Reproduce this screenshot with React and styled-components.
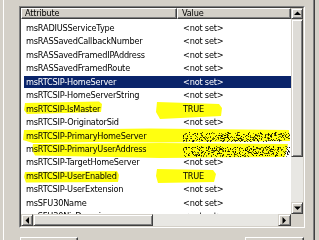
import React, { useMemo } from "react";
import styled, { createGlobalStyle } from "styled-components";

const FACE = "#d4d0c8";
const SHADOW = "#808080";
const DARK = "#404040";
const FONT = `"DejaVu Sans", "Liberation Sans", sans-serif`;

const Global = createGlobalStyle`
  html, body { margin: 0; padding: 0; background: ${FACE}; overflow: hidden; }
  #root { width: 319px; height: 240px; }
`;

const Page = styled.div`
  position: relative;
  width: 319px;
  height: 240px;
  overflow: hidden;
  background: ${FACE};
  display: flex;
  font-family: ${FONT};
  font-size: 8.2px;
  letter-spacing: -0.2px;
  color: #000;
`;

const TabPage = styled.div`
  margin-left: 3px;
  width: 312px;
  height: 240px;
  box-sizing: border-box;
  border-left: 1px solid #fff;
  border-right: 1px solid ${DARK};
  box-shadow: inset -1px 0 ${SHADOW};
  padding: 6px 0 0 15px;
  display: flex;
  flex-direction: column;
`;

const ListBox = styled.div`
  width: 286px;
  height: 222px;
  box-sizing: border-box;
  border: 1px solid;
  border-color: ${SHADOW} #fff #fff ${SHADOW};
  flex: none;
`;

const ListInner = styled.div`
  height: 100%;
  box-sizing: border-box;
  border: 1px solid;
  border-color: ${DARK} ${FACE} ${FACE} ${DARK};
  display: grid;
  grid-template-columns: 1fr 12px;
  grid-template-rows: 1fr 12px;
`;

const ListView = styled.div`
  background: #fff;
  overflow: hidden;
  display: flex;
  flex-direction: column;
`;

const Header = styled.div`
  display: flex;
  height: 11px;
  flex: none;
`;

const HeaderCell = styled.div`
  box-sizing: border-box;
  width: ${(p) => (p.$w ? `${p.$w}px` : "auto")};
  flex: ${(p) => (p.$w ? "none" : "1")};
  background: ${FACE};
  border-top: 1px solid #fff;
  border-left: 1px solid #fff;
  border-right: 1px solid ${DARK};
  border-bottom: 1px solid ${DARK};
  box-shadow: inset -1px -1px ${SHADOW};
  padding-left: ${(p) => p.$pad}px;
  line-height: 9px;
  white-space: nowrap;
  overflow: hidden;
`;

const Rows = styled.div`
  padding-top: 2.6px;
  display: flex;
  flex-direction: column;
`;

const Row = styled.div`
  display: flex;
  align-items: stretch;
  height: 13.45px;
  margin-left: 3px;
  box-sizing: border-box;
  padding: 0.6px 0 1.2px;
  flex: none;
  background: ${(p) => (p.$sel ? "#0a246a" : "transparent")};
  background-clip: content-box;
  color: ${(p) => (p.$sel ? "#fff" : "#000")};
  white-space: nowrap;
`;

const Cell = styled.div`
  box-sizing: border-box;
  width: ${(p) => (p.$w ? `${p.$w}px` : "auto")};
  flex: ${(p) => (p.$w ? "none" : "1")};
  padding-left: ${(p) => p.$pad}px;
  display: flex;
  align-items: center;
  overflow: hidden;
`;

const VScroll = styled.div`
  display: flex;
  flex-direction: column;
  background: #e8e7e3;
`;

const HScroll = styled.div`
  display: flex;
  flex-direction: row;
  background: #e8e7e3;
`;

const Corner = styled.div`
  background: ${FACE};
`;

const ArrowBtn = styled.div`
  box-sizing: border-box;
  flex: none;
  width: ${(p) => p.$w};
  height: ${(p) => p.$h};
  background: ${FACE};
  border: 1px solid;
  border-color: ${FACE} ${DARK} ${DARK} ${FACE};
  box-shadow: inset 1px 1px #fff, inset -1px -1px ${SHADOW};
  display: flex;
  align-items: center;
  justify-content: center;
`;

const Thumb = styled.div`
  box-sizing: border-box;
  flex: none;
  width: ${(p) => p.$w};
  height: ${(p) => p.$h};
  background: #dedcd7;
  border: 1px solid;
  border-color: ${FACE} ${DARK} ${DARK} ${FACE};
  box-shadow: inset 1px 1px #fff, inset -1px -1px ${SHADOW};
`;

const Track = styled.div`
  flex: 1;
`;

const ButtonRow = styled.div`
  display: flex;
  justify-content: space-between;
  width: 286px;
  margin-top: 9px;
  flex: none;
`;

const PushButton = styled.div`
  box-sizing: border-box;
  width: ${(p) => p.$w}px;
  height: 22px;
  margin: 0 ${(p) => p.$mr || 0}px 0 ${(p) => p.$ml || 0}px;
  background: ${FACE};
  border: 1px solid;
  border-color: #fff ${DARK} ${DARK} #fff;
  box-shadow: inset -1px -1px ${SHADOW};
  display: flex;
  align-items: center;
  justify-content: center;
`;

const Overlay = styled.svg`
  position: absolute;
  left: 0;
  top: 0;
  width: 319px;
  height: 240px;
  pointer-events: none;
  mix-blend-mode: multiply;
`;

const Arrow = ({ dir }) => {
  const pts = {
    up: "0,4 3.5,0.5 7,4",
    down: "0,0.5 3.5,4 7,0.5",
    left: "4,0 0.5,3.5 4,7",
    right: "0.5,0 4,3.5 0.5,7",
  }[dir];
  const vertical = dir === "up" || dir === "down";
  return (
    <svg width={vertical ? 7 : 5} height={vertical ? 5 : 7} viewBox={vertical ? "0 0 7 5" : "0 0 5 7"}>
      <polygon points={pts} fill="#000" />
    </svg>
  );
};

const rows = [
  ["msRADIUSServiceType", "<not set>"],
  ["msRASSavedCallbackNumber", "<not set>"],
  ["msRASSavedFramedIPAddress", "<not set>"],
  ["msRASSavedFramedRoute", "<not set>"],
  ["msRTCSIP-HomeServer", "<not set>", true],
  ["msRTCSIP-HomeServerString", "<not set>"],
  ["msRTCSIP-IsMaster", "TRUE"],
  ["msRTCSIP-OriginatorSid", "<not set>"],
  ["msRTCSIP-PrimaryHomeServer", ""],
  ["msRTCSIP-PrimaryUserAddress", ""],
  ["msRTCSIP-TargetHomeServer", "<not set>"],
  ["msRTCSIP-UserEnabled", "TRUE"],
  ["msRTCSIP-UserExtension", "<not set>"],
  ["msSFU30Name", "<not set>"],
  ["msSFU30NisDomain", "<not set>"],
];

const highlights = [
  "25,103 99,101.5 102,104 101,112 27,114 24,110",
  "157,102 219,104 222,108 221,116 160,119 156,112",
  "24,130 150,128.5 289,130 290,141 160,142.5 100,142 33,143 23,140",
  "33,144 160,143 288,144 285,157 160,158 35,155.5 32,150",
  "25,172 117,171 119,175 118,182 26,182.5 24,177",
  "157,169 213,170 216,174 214,182 158,183 156,176",
];

function useNoise() {
  return useMemo(() => {
    let s = 12345;
    const rnd = () => {
      s = (s * 1103515245 + 12345) % 2147483648;
      return s / 2147483648;
    };
    const dots = [];
    const bands = [
      [132, 141],
      [146, 156],
    ];
    for (const [y0, y1] of bands) {
      for (let y = y0; y <= y1; y++) {
        for (let x = 183; x <= 289; x++) {
          const edge = y === y0 || y === y1 ? 0.18 : 0.34;
          if (rnd() < edge) {
            dots.push({ x, y, o: 0.45 + rnd() * 0.55 });
          }
        }
      }
    }
    return dots;
  }, []);
}

export default function App() {
  const dots = useNoise();
  return (
    <>
      <Global />
      <Page>
        <TabPage>
          <ListBox>
            <ListInner>
              <ListView>
                <Header>
                  <HeaderCell $w={156} $pad={3}>Attribute</HeaderCell>
                  <HeaderCell $pad={4}>Value</HeaderCell>
                </Header>
                <Rows>
                  {rows.map(([a, v, sel]) => (
                    <Row key={a} $sel={sel}>
                      <Cell $w={153} $pad={2}>{a}</Cell>
                      <Cell $pad={6}>{v}</Cell>
                    </Row>
                  ))}
                </Rows>
              </ListView>
              <VScroll>
                <ArrowBtn $w="12px" $h="11px"><Arrow dir="up" /></ArrowBtn>
                <Thumb $w="12px" $h="138px" />
                <Track />
                <ArrowBtn $w="12px" $h="12px"><Arrow dir="down" /></ArrowBtn>
              </VScroll>
              <HScroll>
                <ArrowBtn $w="12px" $h="12px"><Arrow dir="left" /></ArrowBtn>
                <Thumb $w="120px" $h="12px" />
                <Track />
                <ArrowBtn $w="13px" $h="12px"><Arrow dir="right" /></ArrowBtn>
              </HScroll>
              <Corner />
            </ListInner>
          </ListBox>
          <ButtonRow>
            <PushButton $w={58} $ml={1}>Edit</PushButton>
            <PushButton $w={59} $mr={1}>Filter</PushButton>
          </ButtonRow>
        </TabPage>
        <Overlay viewBox="0 0 319 240">
          {highlights.map((p, i) => (
            <polygon key={i} points={p} fill="#ffff10" />
          ))}
          {dots.map((d, i) => (
            <rect key={i} x={d.x} y={d.y} width="1" height="1" fill="#000" fillOpacity={d.o} />
          ))}
        </Overlay>
      </Page>
    </>
  );
}
